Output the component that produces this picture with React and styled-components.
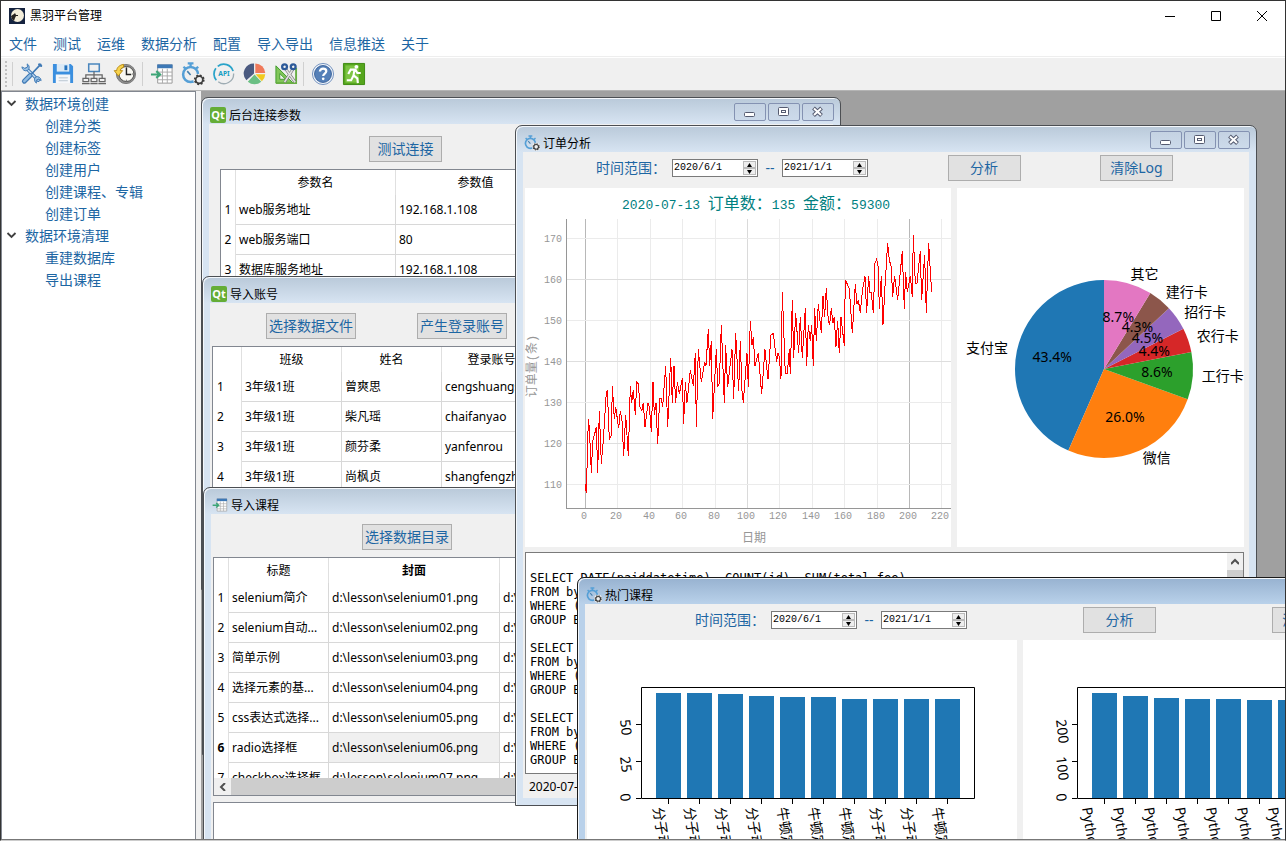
import React from 'react';
import styled, { createGlobalStyle } from 'styled-components';

const sans = "'Noto Sans', 'Noto Sans CJK SC', sans-serif";
const mono = "'DejaVu Sans Mono', 'Noto Sans CJK SC', monospace";
const thin = "'Liberation Mono', 'Noto Sans CJK SC', monospace";
const link = '#1d66a3';

const GlobalStyle = createGlobalStyle`
  * {
    box-sizing: border-box;
  }
  body {
    margin: 0;
    overflow: hidden;
  }
  button, input, textarea {
    font: inherit;
    margin: 0;
    padding: 0;
  }
`;

const Shell = styled.div`
  display: flex;
  flex-direction: column;
  height: 100vh;
  border: 1px solid #333;
  border-bottom-color: #ccc;
  background: #f0f0f0;
  font: 12px/18px ${sans};
  color: #000;
`;

const TitleBar = styled.header`
  display: flex;
  align-items: center;
  height: 29px;
  padding-left: 8px;
  gap: 5px;
  background: #fff;
`;

const AppTitle = styled.h1`
  flex: 1;
  margin: 0;
  font: inherit;
`;

const CaptionButtons = styled.div`
  display: flex;
`;

const CaptionButton = styled.button`
  width: 46px;
  height: 29px;
  border: 0;
  background: none;

  svg {
    display: block;
    margin: auto;
  }
`;

const MenuBar = styled.nav`
  display: flex;
  gap: 16px;
  height: 27px;
  padding: 4px 8px 0;
  border-bottom: 1px solid #eee;
  background: #fff;
`;

const MenuLink = styled.a`
  color: ${link};
  font-size: 14px;
  line-height: 20px;
  text-decoration: none;
`;

const ToolBar = styled.div`
  display: flex;
  align-items: center;
  height: 34px;
  border-top: 1px solid #fff;
  border-bottom: 1px solid #b4b4b4;
  background: #f0f0f0;
`;

const Grip = styled.div`
  width: 2px;
  height: 26px;
  margin: 0 3px 0 4px;
  border-left: 2px dotted #c0c0c0;
`;

const Divider = styled.div`
  width: 1px;
  height: 24px;
  margin: 0 3px 0 2px;
  background: #d0d0d0;
`;

const ToolButton = styled.button`
  width: 31px;
  height: 30px;
  border: 0;
  background: none;

  svg {
    display: block;
    margin: auto;
  }
`;

const Main = styled.main`
  display: flex;
  flex: 1;
  gap: 5px;
  min-height: 0;
  border-bottom: 1px solid #777;
`;

const Sidebar = styled.aside`
  flex: 0 0 195px;
  padding-top: 1px;
  border: 1px solid #828790;
  border-bottom: 0;
  background: #fff;
`;

const Tree = styled.ul`
  margin: 0;
  padding: 0;
  list-style: none;
`;

const TreeRow = styled.a`
  display: flex;
  align-items: center;
  height: 22px;
  padding-left: ${p => (p.$child ? 43 : 4)}px;
  gap: 7px;
  color: ${link};
  font-size: 14px;
  text-decoration: none;
`;

const Desktop = styled.section`
  position: relative;
  flex: 1;
  overflow: hidden;
  background: #a0a0a0;
`;

const Frame = styled.article`
  position: absolute;
  left: ${p => p.$x}px;
  top: ${p => p.$y}px;
  display: flex;
  flex-direction: column;
  width: ${p => p.$w}px;
  height: ${p => p.$h}px;
  padding: 0 7px 7px;
  border: 1px solid ${p => (p.$active ? '#1a1a1a' : '#4c4f53')};
  border-radius: 7px 7px 0 0;
  box-shadow: inset 1px 1px 0 #f4f8fc;
  background: ${p =>
    p.$active
      ? 'linear-gradient(#97b2d0, #b9d1ea 26px)'
      : 'linear-gradient(#b9c9d9, #d7e4f2 26px)'};
`;

const FrameBar = styled.header`
  display: flex;
  flex: 0 0 26px;
  align-items: flex-end;
  padding: 0 0 1px 1px;
`;

const FrameTitle = styled.h2`
  flex: 1;
  margin: 0 0 0 3px;
  font: inherit;
  line-height: 14px;
`;

const FrameButtons = styled.div`
  display: flex;
  align-self: flex-start;
  gap: 2px;
  padding-top: 5px;
  margin-right: -1px;
`;

const FrameButton = styled.button`
  width: 32px;
  height: 18px;
  border: 1px solid #8492b2;
  border-radius: 2px;
  background: linear-gradient(#c4d2e2, #ccdaea);

  svg {
    display: block;
    margin: auto;
  }
`;

const FrameBody = styled.div`
  display: flex;
  flex: 1;
  flex-direction: column;
  min-height: 0;
  padding: ${p => p.$pad};
  background: #f0f0f0;
`;

const QtMark = styled.span`
  width: 16px;
  height: 16px;
  border-radius: 2px;
  background: #65ad36;
  color: #fff;
  font: bold 11px/15px 'Noto Sans', sans-serif;
  text-align: center;
`;

const Actions = styled.div`
  display: flex;
  gap: 61px;
  padding: 0 0 7px ${p => p.$indent}px;
`;

const PushButton = styled.button`
  width: ${p => (p.$wide ? 90 : 73)}px;
  height: 26px;
  border: 1px solid #adadad;
  background: #e1e1e1;
  color: ${link};
  font-size: 14px;
  white-space: nowrap;
`;

const Sheet = styled.div`
  flex: ${p => (p.$h ? '0 0 ' + p.$h + 'px' : 1)};
  display: flex;
  flex-direction: column;
  min-height: 0;
  overflow: hidden;
  border: 1px solid #828790;
  background: #fff;
`;

const SheetView = styled.div`
  flex: 1;
  min-height: 0;
  overflow: hidden;
`;

const Grid = styled.table`
  table-layout: fixed;
  width: 0;
  border-collapse: separate;
  border-spacing: 0;
`;

const ColHead = styled.th`
  height: 25px;
  padding: 0;
  border-right: 1px solid #e0e0e0;
  font-weight: ${p => (p.$strong ? 'bold' : 'normal')};
`;

const RowHead = styled.th`
  height: 30px;
  padding: 0 0 0 ${p => (p.$wide ? 4 : 0)}px;
  border-right: 1px solid #e0e0e0;
  font-weight: ${p => (p.$strong ? 'bold' : 'normal')};
  text-align: ${p => (p.$wide ? 'left' : 'center')};
`;

const Cell = styled.td`
  height: 30px;
  padding: 0 3px;
  overflow: hidden;
  border-right: 1px solid #d8d8d8;
  border-bottom: 1px solid #d8d8d8;
  background: ${p => (p.$selected ? '#f0f0f0' : '#fff')};
  white-space: nowrap;
`;

const HScroll = styled.div`
  display: flex;
  flex: 0 0 17px;
  background: #f0f0f0;
`;

const VScroll = styled.div`
  display: flex;
  flex: 0 0 16px;
  flex-direction: column;
  background: #f0f0f0;
`;

const ScrollArrow = styled.button`
  flex: 0 0 17px;
  border: 0;
  background: #f0f0f0;

  svg {
    display: block;
    margin: auto;
  }
`;

const Thumb = styled.div`
  flex: 1;
  background: #cdcdcd;
`;

const Output = styled.textarea`
  height: 60px;
  margin-top: 6px;
  border: 1px solid #828790;
  background: #fff;
  resize: none;
`;

const FilterBar = styled.form`
  display: flex;
  flex: 0 0 36px;
  align-items: flex-start;
  justify-content: space-between;
  padding: 3px ${p => p.$inset}px 0;
`;

const Range = styled.div`
  display: flex;
  align-items: center;
  gap: 6px;
  height: 26px;
  color: ${link};
  font-size: 14px;
`;

const Dash = styled.span`
  width: 12px;
  text-align: center;
`;

const DateBox = styled.span`
  display: flex;
  width: 86px;
  height: 18px;
  border: 1px solid #7a7a7a;
  background: #fff;
`;

const DateInput = styled.input`
  flex: 1;
  min-width: 0;
  padding-left: 1px;
  border: 0;
  outline: 0;
  background: none;
  color: #000;
  font: 10px/16px ${thin};
`;

const Spinner = styled.span`
  display: flex;
  flex: 0 0 15px;
  flex-direction: column;
  padding: 1px;
`;

const SpinButton = styled.button`
  flex: 1;
  border: 1px solid #bbb;
  background: #eee;

  svg {
    display: block;
    margin: auto;
  }
`;

const Panels = styled.div`
  display: flex;
  flex: 0 0 359px;
  gap: 6px;
`;

const Panel = styled.div`
  flex: ${p => p.$grow} 1 0;
  overflow: hidden;
  background: #fff;

  svg {
    display: block;
  }
`;

const LogBox = styled.div`
  display: flex;
  flex: 0 0 222px;
  margin-top: 5px;
  border: 1px solid #7a7a7a;
  background: #fff;
`;

const Log = styled.textarea`
  flex: 1;
  padding: 4px;
  overflow: hidden;
  border: 0;
  outline: 0;
  background: none;
  font: 12px/14px ${mono};
  resize: none;
`;

const Status = styled.p`
  margin: 4px 4px 0;
`;

const menus = ['文件', '测试', '运维', '数据分析', '配置', '导入导出', '信息推送', '关于'];

const tree = [
  { name: '数据环境创建', items: ['创建分类', '创建标签', '创建用户', '创建课程、专辑', '创建订单'] },
  { name: '数据环境清理', items: ['重建数据库', '导出课程'] }
];

const params = [
  ['web服务地址', '192.168.1.108'],
  ['web服务端口', '80'],
  ['数据库服务地址', '192.168.1.108']
];

const accounts = [
  ['3年级1班', '曾爽思', 'cengshuangsi'],
  ['3年级1班', '柴凡瑶', 'chaifanyao'],
  ['3年级1班', '颜芬柔', 'yanfenrou'],
  ['3年级1班', '尚枫贞', 'shangfengzhen']
];

const lessons = [
  'selenium简介',
  'selenium自动...',
  '简单示例',
  '选择元素的基...',
  'css表达式选择...',
  'radio选择框',
  'checkbox选择框'
].map((name, i) => [name, `d:\\lesson\\selenium0${i + 1}.png`, 'd:\\lesson']);

const query = 'FROM byhy_order\nWHERE (paid)\nGROUP BY day';
const log = `
SELECT DATE(paiddatetime), COUNT(id), SUM(total_fee)
${query}

SELECT DATE
${query}

SELECT DATE
${query}
`;

// three units per pixel, origin at the top left corner of the plot
const orders =
  '58,793 58,805 61,818 67,597 70,622 76,758 80,665 91,622 95,758 100,573 106,731 112,660 121,516 124,510 130,659 136,645 139,498 145,597 149,561 158,625 163,573 168,603 173,707 179,585 187,707 193,498 197,548 202,510 208,585 212,486 217,492 222,560 228,572 232,548 237,622 246,548 250,560 256,635 261,486 265,585 270,548 275,671 281,535 286,535 290,560 299,438 305,622 314,413 319,548 324,438 329,548 334,486 340,523 349,474 353,611 358,486 363,548 373,450 382,498 388,400 391,622 397,388 406,486 416,425 420,437 427,327 431,437 436,363 440,597 451,388 455,498 460,490 466,315 475,548 479,375 485,500 498,388 503,538 509,339 518,512 523,363 528,512 532,548 543,400 547,500 553,303 558,375 562,352 567,437 577,400 587,523 597,388 606,478 615,345 622,340 632,425 636,400 640,410 645,476 649,215 658,461 664,460 670,388 673,461 679,240 683,413 689,280 698,400 703,291 709,413 718,265 722,437 727,315 733,363 737,315 742,437 746,265 751,363 757,252 766,340 771,228 776,290 781,204 787,303 791,315 796,265 801,310 805,291 810,380 815,303 820,400 825,291 835,377 838,180 850,205 859,340 868,192 873,253 877,240 883,278 889,215 897,168 902,278 908,168 912,217 916,218 922,278 927,130 932,117 937,141 940,266 946,168 951,315 957,200 965,69 970,120 976,141 980,230 986,168 995,241 1009,93 1015,266 1019,156 1024,217 1033,168 1039,230 1042,45 1048,190 1053,190 1063,93 1067,241 1076,105 1081,278 1088,69 1097,217';

const payments = [
  ['支付宝', 43.4, '#1f77b4'],
  ['微信', 26.0, '#ff7f0e'],
  ['工行卡', 8.6, '#2ca02c'],
  ['农行卡', 4.4, '#d62728'],
  ['招行卡', 4.5, '#9467bd'],
  ['建行卡', 4.3, '#8c564b'],
  ['其它', 8.7, '#e377c2']
];

const icons = {
  tools: (
    <g fill='none' strokeLinecap='round'>
      <path d='M7 7l12 12' stroke='#3f79b5' strokeWidth='3.4' />
      <path d='M7 7l12 12' stroke='#c3dcf2' strokeWidth='1.4' />
      <path d='M2 5.500a4 4 0 0 0 6 3.200a4 4 0 0 0-.5-6.700l.3 3.300-2.300 1.200zM22 19a4 4 0 0 0-5.500-3.500a4 4 0 0 0 .6 6.500l-.2-3 2.100-1z' fill='#9cc3e6' stroke='#3f79b5' />
      <path d='M21.500 2.500l-9 9.500' stroke='#3f79b5' strokeWidth='1.800' />
      <path d='M20 2.500l2 1.500' stroke='#3f79b5' strokeWidth='2.400' />
      <path d='M10.500 14L4.500 20' stroke='#3f79b5' strokeWidth='5' />
      <path d='M10.500 14L4.500 20' stroke='#8fbbe2' strokeWidth='2.600' />
    </g>
  ),
  save: (
    <g>
      <path d='M2 2h18.500L23 4.500V22H2z' fill='#3b8fdf' />
      <path d='M6 2h13v8H6z' fill='#dceaf6' />
      <path d='M14 3.500h3v5h-3z' fill='#2673bd' />
      <path d='M5 13h15v9H5z' fill='#f5f7fa' />
      <path d='M8 16.500h9.500M8 19.500h9.500' stroke='#b7c4cf' />
    </g>
  ),
  network: (
    <g fill='none' stroke='#666' strokeWidth='1.300'>
      <path d='M7 2h11v8H7z' stroke='#4a86bd' strokeWidth='1.600' />
      <path d='M12.500 10v7M4 17v-3.500h17V17' />
      <path d='M1 17h6v3.500H1zM9.500 17h6v3.500h-6zM18 17h6v3.500h-6zM0 22.500h8M8.700 22.500h7.600M17 22.500h8' />
    </g>
  ),
  history: (
    <g>
      <circle cx='13.500' cy='12.500' r='10' fill='#8f8f8f' stroke='#777' />
      <circle cx='14' cy='12.500' r='7.800' fill='#f8f8f3' stroke='#4b4b4b' />
      <path d='M14 6v7h5' fill='none' stroke='#222' strokeWidth='1.500' />
      <path d='M14 5.500v1M14 18.500v1M20 12.500h1' stroke='#444' />
      <path d='M11 2.500C7 3 4 5.500 3.800 9H1.300l4.200 5.500L10 9H7.500c.3-1.800 1.400-3 3.500-3.500z' fill='#f8d34c' stroke='#b78a15' />
    </g>
  ),
  importTable: (
    <g>
      <path d='M8 3h15v19H8z' fill='#fff' stroke='#999' />
      <path d='M7.500 2.500h16v4h-16z' fill='#3d78b6' />
      <path d='M8 10.500h15M8 14.500h15M8 18.500h15M13 7v15M18 7v15' stroke='#aaa' />
      <path d='M1 13h8M6.500 9.500L10.500 13l-4 3.500' fill='none' stroke='#3da577' strokeWidth='2.200' />
    </g>
  ),
  stopwatch: (
    <g fill='none'>
      <path d='M7 1.500h6M10 2v4M2.500 5l2.500 2M18 5l-2.500 2' stroke='#559fd6' strokeWidth='2.400' />
      <circle cx='10' cy='13' r='7.800' stroke='#559fd6' strokeWidth='2.600' />
      <path d='M10 13.500L6.500 9.500' stroke='#457fad' strokeWidth='1.600' />
      <circle cx='19' cy='18.500' r='6.300' fill='#f0f0f0' />
      <circle cx='19' cy='18.500' r='4.800' stroke='#3c3c3c' strokeWidth='1.600' strokeDasharray='2 1.770' />
      <circle cx='19' cy='18.500' r='3.700' stroke='#3c3c3c' strokeWidth='1.800' />
    </g>
  ),
  api: (
    <g fill='none'>
      <path d='M4.500 19a10 10 0 0 1-.5-12.500M6 4.500a10 10 0 0 1 16 5' stroke='#29a3c9' strokeWidth='1.800' />
      <path d='M22.500 12a10 10 0 0 1-16 8.500' stroke='#9eacb3' strokeWidth='1.400' />
      <text x='12.500' y='14.500' fill='#159cc3' fontFamily="'Noto Sans', sans-serif" fontWeight='bold' fontSize='7' textAnchor='middle'>API</text>
    </g>
  ),
  pie: (
    <g>
      <path d='M11.500 12V1.500a10.500 10.500 0 0 0-8 17.500z' fill='#4b5a80' />
      <path d='M12.800 11.500v-10a10.500 10.500 0 0 1 10.400 10z' fill='#f0795a' />
      <path d='M13 12.800h10.200a10.500 10.500 0 0 1-3.500 7.200z' fill='#f1ca1e' />
      <path d='M12 13l7 7.500a10.500 10.500 0 0 1-14 0z' fill='#6abf83' />
    </g>
  ),
  design: (
    <g fill='none'>
      <path d='M2 4v18h18z' fill='#81c659' stroke='#3f9b2a' />
      <path d='M6 12v6h6z' fill='#f0f0f0' stroke='#3f9b2a' />
      <path d='M2 22h21V6' stroke='#69ae45' strokeWidth='2' />
      <path d='M20 7l-9 14M12 7l10 14' stroke='#777' strokeWidth='3' />
      <path d='M20 7l-9 14M12 7l10 14' stroke='#e2e2e2' strokeWidth='1.700' />
      <circle cx='11' cy='5' r='2.500' stroke='#2d5a99' strokeWidth='2.400' />
      <circle cx='20' cy='5' r='2.500' stroke='#2d5a99' strokeWidth='2.400' />
    </g>
  ),
  help: (
    <g>
      <circle cx='12.500' cy='12.500' r='11' fill='#eef3f9' stroke='#7290bd' />
      <circle cx='12.500' cy='12.500' r='8.800' fill='#5580b8' stroke='#3b629b' />
      <path d='M9.300 10c0-4.300 6.800-4 6.600-.3-.1 2.400-3.200 2.400-3.200 5' fill='none' stroke='#fff' strokeWidth='2.400' />
      <circle cx='12.700' cy='17.500' r='1.400' fill='#fff' />
    </g>
  ),
  exit: (
    <g>
      <path d='M1.500 1.500h22v22h-22z' fill='#55a51c' stroke='#3c8a10' />
      <path d='M3.500 3.500h14v18h-14z' fill='#7cc442' />
      <circle cx='15' cy='5' r='2' fill='#fff' />
      <path d='M13 8l-1 6 4 3 .5 5M12 14l-2.500 5H5M6.500 12.500l2.500-4.500h5l2 3.500h3.500' fill='none' stroke='#fff' strokeWidth='2.200' />
    </g>
  )
};

const Icon = ({ name, size = 24 }) => (
  <svg width={size} height={size} viewBox='0 0 25 25' aria-hidden='true'>
    {icons[name]}
  </svg>
);

const tools = [
  [['工具', 'tools'], ['保存', 'save'], ['网络', 'network'], ['历史', 'history']],
  [
    ['导入', 'importTable'],
    ['分析', 'stopwatch'],
    ['API', 'api'],
    ['图表', 'pie'],
    ['设计', 'design']
  ],
  [['帮助', 'help'], ['退出', 'exit']]
];

const Window = ({ title, icon, x, y, w, h, active, pad, children }) => (
  <Frame $x={x} $y={y} $w={w} $h={h} $active={active}>
    <FrameBar>
      {icon ? <Icon name={icon} size={16} /> : <QtMark>Qt</QtMark>}
      <FrameTitle>{title}</FrameTitle>
      <FrameButtons>
        <FrameButton aria-label='最小化'>
          <svg width='12' height='12' fill='#fff' stroke='#555b70'>
            <rect x='0.500' y='6.500' width='10' height='4' rx='1' />
          </svg>
        </FrameButton>
        <FrameButton aria-label='最大化'>
          <svg width='12' height='12' fill='#fff' stroke='#555b70'>
            <rect x='0.500' y='1.500' width='10' height='8' rx='1' />
            <rect x='3.500' y='4.500' width='4' height='2' />
          </svg>
        </FrameButton>
        <FrameButton aria-label='关闭'>
          <svg width='12' height='12' fill='none'>
            <path d='M1.500 2l8 7.500M9.500 2l-8 7.500' stroke='#555b70' strokeWidth='4' />
            <path d='M2 2.500l7 6.500M9 2.500L2 9' stroke='#fff' strokeWidth='2' />
          </svg>
        </FrameButton>
      </FrameButtons>
    </FrameBar>
    <FrameBody $pad={pad}>{children}</FrameBody>
  </Frame>
);

const DataTable = ({ heads, widths, rows, wide, current }) => (
  <Grid>
    <colgroup>
      {widths.map((width, i) => (
        <col key={i} style={{ width }} />
      ))}
    </colgroup>
    <thead>
      <tr>
        <ColHead />
        {heads.map((head, i) => (
          <ColHead key={i} scope='col' $strong={current && current[1] === i}>
            {head}
          </ColHead>
        ))}
      </tr>
    </thead>
    <tbody>
      {rows.map((row, i) => (
        <tr key={i}>
          <RowHead scope='row' $wide={wide} $strong={current && current[0] === i}>
            {i + 1}
          </RowHead>
          {row.map((value, j) => (
            <Cell key={j} $selected={current && current[0] === i && current[1] === j}>
              {value}
            </Cell>
          ))}
        </tr>
      ))}
    </tbody>
  </Grid>
);

const DateField = ({ id, label, value }) => (
  <DateBox>
    <DateInput id={id} aria-label={label} defaultValue={value} />
    <Spinner>
      <SpinButton type='button' aria-label='增加'>
        <svg width='5' height='4'><path d='M0 4L2.500 0 5 4z' /></svg>
      </SpinButton>
      <SpinButton type='button' aria-label='减少'>
        <svg width='5' height='4'><path d='M0 0L2.500 4 5 0z' /></svg>
      </SpinButton>
    </Spinner>
  </DateBox>
);

const Filter = ({ id, inset }) => (
  <FilterBar $inset={inset} onSubmit={e => e.preventDefault()}>
    <Range>
      <label htmlFor={id}>时间范围：</label>
      <DateField id={id} label='开始日期' value='2020/6/1' />
      <Dash>--</Dash>
      <DateField id={id + '-end'} label='结束日期' value='2021/1/1' />
    </Range>
    <PushButton>分析</PushButton>
    <PushButton type='button'>清除Log</PushButton>
  </FilterBar>
);

const gridColor = n => (n % 200 === 0 ? '#b8b8b8' : n % 100 === 0 ? '#dadada' : '#ebebeb');

const OrderChart = () => (
  <svg width='426' height='359' fontFamily={thin} fontSize='10' fill='#969696'>
    <text x='97' y='21' fontSize='16' fill='#008080'>
      <tspan fontSize='13'>2020-07-13 </tspan>订单数：<tspan fontSize='13'>135 </tspan>金额：
      <tspan fontSize='13'>59300</tspan>
    </text>
    <g shapeRendering='crispEdges' fill='none'>
      {[...Array(12).keys()].map(i => (
        <path key={i} d={`M${Math.round(60 + i * 32.4) + 0.5} 31v289`} stroke={gridColor(i * 20)} />
      ))}
      {[...Array(7).keys()].map(i => (
        <path key={i} d={`M42 ${50.5 + i * 41}h384`} stroke={i % 2 ? '#dedede' : '#ebebeb'} />
      ))}
      <path d='M41.500 31v289.500H426' stroke='#969696' />
      <g transform='translate(41 32) scale(0.3333)'>
        <polyline points={orders} stroke='#f00' vectorEffect='non-scaling-stroke' />
      </g>
    </g>
    {[...Array(7).keys()].map(i => (
      <text key={i} x='37' y={54 + i * 41} textAnchor='end'>{170 - i * 10}</text>
    ))}
    {[...Array(12).keys()].map(i => (
      <text key={i} x={Math.round(59 + i * 32.4)} y='331' textAnchor='middle'>{i * 20}</text>
    ))}
    <text x='229' y='354' fontSize='12' textAnchor='middle'>日期</text>
    <text transform='translate(11 178) rotate(-90)' fontSize='12' textAnchor='middle'>订单量(条)</text>
  </svg>
);

const polar = (turn, radius) => {
  const a = Math.PI / 2 + turn * Math.PI * 2;
  return [147 + Math.cos(a) * radius, 181 - Math.sin(a) * radius];
};

const PieChart = () => {
  let start = 0;
  const slices = payments.map(([name, share, color]) => {
    const end = start + share / 99.9;
    const slice = { name, share, color, start, end, mid: (start + end) / 2 };
    start = end;
    return slice;
  });
  return (
    <svg width='287' height='359' fontFamily={sans} fontSize='14'>
      {slices.map(s => (
        <path
          key={s.name}
          fill={s.color}
          d={`M147 181L${polar(s.start, 89)}A89 89 0 0 0 ${polar(s.end, 89)}z`}
        />
      ))}
      {slices.map(s => {
        const [lx, ly] = polar(s.mid, 98);
        const [px, py] = polar(s.mid, 53);
        return (
          <g key={s.name}>
            <text x={lx} y={ly + 4} textAnchor={s.mid < 0.5 ? 'end' : 'start'}>{s.name}</text>
            <text x={px} y={py + 4} textAnchor='middle'>{s.share.toFixed(1)}%</text>
          </g>
        );
      })}
    </svg>
  );
};

const BarChart = ({ bars, step, shift }) => (
  <svg width='430' height='359' fontFamily={sans} fontSize='14'>
    {bars.map(([label, height], i) => (
      <g key={i}>
        <rect x={69 + i * 31} y={158 - height} width='25' height={height} fill='#1f77b4' />
        <path d={`M${81.5 + i * 31} 158v6`} stroke='#000' />
        <text transform={`translate(${81 - shift + i * 31} 168) rotate(81)`}>{label}</text>
      </g>
    ))}
    {[0, 1, 2].map(i => (
      <g key={i}>
        <path d={`M49 ${158.5 - i * 37}h5`} stroke='#000' />
        <text transform={`translate(33 ${154 - i * 37}) rotate(83)`}>{i * step}</text>
      </g>
    ))}
    <path d='M54.500 47.500h333v111h-333z' fill='none' stroke='#000' />
  </svg>
);

const hotLeft = [105, 105, 104, 102, 101, 101, 99, 99, 99, 99].map((h, i) => [
  [4, 5, 6, 9].includes(i) ? '牛顿定律' : '分子动理论',
  h
]);
const hotRight = [105, 102, 100, 99, 99, 98, 98, 98, 98, 98].map(h => ['Python', h]);

const App = () => (
  <>
    <GlobalStyle />
    <Shell>
      <TitleBar>
        <svg width='16' height='16'>
          <path d='M0 0h16v16H0z' fill='#15233f' />
          <circle cx='8.500' cy='7.500' r='6.500' fill='#f3edda' />
          <path d='M2 8l3-2 1-1 1 2h2v1H7l-1 2-1 3-2-2z' fill='#26221f' />
        </svg>
        <AppTitle>黑羽平台管理</AppTitle>
        <CaptionButtons>
          <CaptionButton aria-label='最小化'>
            <svg width='10' height='10'><path d='M0 5.500h10' stroke='#000' /></svg>
          </CaptionButton>
          <CaptionButton aria-label='最大化'>
            <svg width='10' height='10'><path d='M.5.5h9v9h-9z' fill='none' stroke='#000' /></svg>
          </CaptionButton>
          <CaptionButton aria-label='关闭'>
            <svg width='10' height='10'><path d='M0 0l10 10M10 0L0 10' stroke='#000' /></svg>
          </CaptionButton>
        </CaptionButtons>
      </TitleBar>
      <MenuBar>
        {menus.map(name => (
          <MenuLink key={name} href='#'>{name}</MenuLink>
        ))}
      </MenuBar>
      <ToolBar>
        <Grip />
        {tools.map((group, i) => (
          <React.Fragment key={i}>
            <Divider />
            {group.map(([label, name]) => (
              <ToolButton key={name} aria-label={label}>
                <Icon name={name} />
              </ToolButton>
            ))}
          </React.Fragment>
        ))}
      </ToolBar>
      <Main>
        <Sidebar>
          <Tree>
            {tree.map(node => (
              <li key={node.name}>
                <TreeRow href='#'>
                  <svg width='12' height='10' fill='none' stroke='#404040' strokeWidth='1.800'>
                    <path d='M1.500 2l4 4 4-4' />
                  </svg>
                  {node.name}
                </TreeRow>
                <Tree>
                  {node.items.map(item => (
                    <li key={item}>
                      <TreeRow href='#' $child>{item}</TreeRow>
                    </li>
                  ))}
                </Tree>
              </li>
            ))}
          </Tree>
        </Sidebar>
        <Desktop>
          <Window title='后台连接参数' x={0} y={6} w={640} h={493} pad='12px 11px'>
            <Actions $indent={149}>
              <PushButton>测试连接</PushButton>
            </Actions>
            <Sheet>
              <DataTable heads={['参数名', '参数值']} widths={[15, 160, 160]} rows={params} />
            </Sheet>
          </Window>

          <Window title='导入账号' x={1} y={185} w={640} h={479} pad='10px 2px'>
            <Actions $indent={54}>
              <PushButton $wide>选择数据文件</PushButton>
              <PushButton $wide>产生登录账号</PushButton>
            </Actions>
            <Sheet>
              <DataTable
                heads={['班级', '姓名', '登录账号']}
                widths={[29, 100, 100, 100]}
                rows={accounts}
                wide
              />
            </Sheet>
          </Window>

          <Window title='导入课程' icon='importTable' x={2} y={396} w={640} h={480} pad='10px 2px'>
            <Actions $indent={149}>
              <PushButton $wide>选择数据目录</PushButton>
            </Actions>
            <Sheet $h={239}>
              <SheetView>
                <DataTable
                  heads={['标题', '封面', '']}
                  widths={[15, 100, 171, 100]}
                  rows={lessons}
                  current={[5, 1]}
                />
              </SheetView>
              <HScroll>
                <ScrollArrow aria-label='向左滚动'>
                  <svg width='8' height='8' fill='none' stroke='#505050' strokeWidth='2'>
                    <path d='M6 0L2 4l4 4' />
                  </svg>
                </ScrollArrow>
                <Thumb />
              </HScroll>
            </Sheet>
            <Output aria-label='输出' readOnly />
          </Window>

          <Window title='订单分析' icon='stopwatch' x={314} y={34} w={742} h={681} pad='0 5px 0 2px'>
            <Filter id='orders' inset={71} />
            <Panels>
              <Panel $grow={426}><OrderChart /></Panel>
              <Panel $grow={287}><PieChart /></Panel>
            </Panels>
            <LogBox>
              <Log aria-label='Log' readOnly spellCheck={false} wrap='off' value={'\n' + log.slice(1)} />
              <VScroll>
                <ScrollArrow aria-label='向上滚动'>
                  <svg width='8' height='8' fill='none' stroke='#505050' strokeWidth='2'>
                    <path d='M0 6l4-4 4 4' />
                  </svg>
                </ScrollArrow>
                <Thumb />
              </VScroll>
            </LogBox>
            <Status>2020-07-13</Status>
          </Window>

          <Window title='热门课程' icon='stopwatch' x={376} y={486} w={889} h={480} active pad='0 5px 0 2px'>
            <Filter id='hot' inset={108} />
            <Panels>
              <Panel $grow={1}><BarChart bars={hotLeft} step={25} shift={15} /></Panel>
              <Panel $grow={1}><BarChart bars={hotRight} step={100} shift={22} /></Panel>
            </Panels>
          </Window>
        </Desktop>
      </Main>
    </Shell>
  </>
);

export default App;
